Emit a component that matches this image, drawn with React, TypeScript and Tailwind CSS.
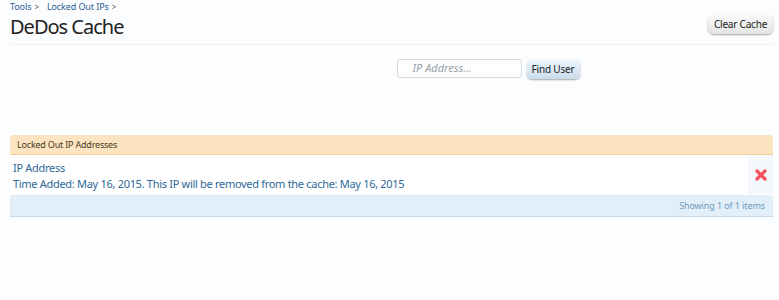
import React from "react"

const App: React.FC = () => {
    return (
        <div className="w-[779px] h-[300px] bg-[#fcfdfe] text-[#222] font-['Noto_Sans',sans-serif] overflow-hidden">
            <div className="pl-[10px] pr-[6px]">
                <div className="flex justify-between items-start border-b border-[#eef2f7]">
                    <div>
                        <div className="text-[9px] leading-[12px] text-[#2b5f93] pt-[1px] tracking-[-0.1px]">
                            <span>Tools</span>
                            <span className="text-[#555] ml-[3px] text-[8px]">&gt;</span>
                            <span className="ml-[8px]">Locked Out IPs</span>
                            <span className="text-[#555] ml-[3px] text-[8px]">&gt;</span>
                        </div>
                        <h1 className="text-[20px] leading-[26px] mt-[1px] mb-[4px] text-[#222] tracking-[-1px]">DeDos Cache</h1>
                    </div>
                    <button className="mt-[14px] h-[20px] w-[65px] rounded-[6px] bg-gradient-to-b from-[#fafafa] to-[#e4e4e4] text-[10px] text-[#222] tracking-[-0.2px] shadow-[0_1px_2px_rgba(0,0,0,0.35)]">
                        Clear Cache
                    </button>
                </div>

                <div className="flex justify-center items-center gap-[5px] pt-[13px] pl-[193px]">
                    <div className="w-[125px] h-[19px] bg-white border border-[#d5dbe3] rounded-[3px] flex items-center pl-[15px]">
                        <span className="text-[11px] italic text-[#9aa2ab]">IP Address...</span>
                    </div>
                    <button className="h-[19px] w-[53px] rounded-[5px] bg-gradient-to-b from-[#eef5fb] to-[#c9dcec] text-[10px] text-[#222] tracking-[-0.2px] shadow-[0_1px_2px_rgba(0,0,0,0.35)] mt-[2px]">
                        Find User
                    </button>
                </div>

                <div className="mt-[56px]">
                    <div className="h-[20px] bg-[#fbe4bf] border-b border-[#f3cd96] rounded-t-[3px] flex items-center pl-[7px] text-[9px] text-[#4a3a25] tracking-[-0.2px]">
                        Locked Out IP Addresses
                    </div>
                    <div className="flex bg-white h-[39px]">
                        <div className="flex-1 pl-[3px] pt-[5px] text-[#2d6897] text-[11px] tracking-[-0.3px]">
                            <div className="leading-[16px]">IP Address</div>
                            <div className="leading-[16px]">Time Added: May 16, 2015. This IP will be removed from the cache: May 16, 2015</div>
                        </div>
                        <div className="w-[25px] bg-[#f4f7fb] flex items-center justify-center">
                            <svg width="12" height="12" viewBox="0 0 12 12">
                                <path d="M2 2 L10 10 M10 2 L2 10" stroke="#f0535d" strokeWidth="3.2" strokeLinecap="round" />
                            </svg>
                        </div>
                    </div>
                    <div className="h-[22px] mt-[1px] bg-[#e2eff9] border-b border-[#c6dbec] flex items-center justify-end pr-[8px] text-[9px] text-[#6e9cc0] tracking-[-0.1px]">
                        Showing 1 of 1 items
                    </div>
                </div>
            </div>
        </div>
    )
}

export default App
